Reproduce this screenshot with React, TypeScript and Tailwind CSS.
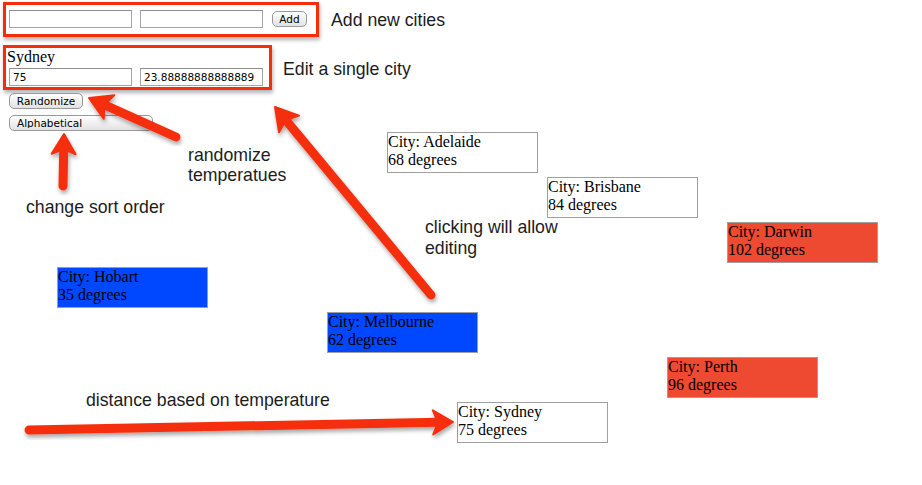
import { useState } from 'react'

type City = { name: string; temp: number }

const cities: City[] = [
  { name: 'Adelaide', temp: 68 },
  { name: 'Brisbane', temp: 84 },
  { name: 'Darwin', temp: 102 },
  { name: 'Hobart', temp: 35 },
  { name: 'Melbourne', temp: 62 },
  { name: 'Perth', temp: 96 },
  { name: 'Sydney', temp: 75 },
]

function colorFor(t: number) {
  if (t < 65) return 'bg-[#0048ff]'
  if (t > 90) return 'bg-[#ee4a32]'
  return 'bg-white'
}

function Arrow({ x1, y1, x2, y2, len = 22, half = 13 }: { x1: number; y1: number; x2: number; y2: number; len?: number; half?: number }) {
  const d = Math.hypot(x2 - x1, y2 - y1)
  const ux = (x2 - x1) / d
  const uy = (y2 - y1) / d
  const nx = -uy
  const ny = ux
  const bx = x2 - ux * len
  const by = y2 - uy * len
  const cx = x2 - ux * (len - 5)
  const cy = y2 - uy * (len - 5)
  const pts = [
    [x2, y2],
    [bx + nx * half, by + ny * half],
    [cx, cy],
    [bx - nx * half, by - ny * half],
  ].map(p => p.join(',')).join(' ')
  return (
    <g filter="url(#shadow)">
      <line x1={x1} y1={y1} x2={cx} y2={cy} stroke="#f52f0c" strokeWidth={9} strokeLinecap="round" />
      <polygon points={pts} fill="#f52f0c" stroke="#f52f0c" strokeWidth={2} strokeLinejoin="round" />
    </g>
  )
}

const inp = 'w-[123px] h-[18px] border border-[#a5a5a5] border-t-[#8e8e8e] bg-white px-[3px] text-[10.5px] text-black outline-none font-["DejaVu_Sans",sans-serif]'
const btn = 'h-[16px] rounded-[5px] border border-[#9a9a9a] bg-gradient-to-b from-white to-[#e2e2e2] text-[10.5px] leading-none text-black font-["DejaVu_Sans",sans-serif]'
const note = 'absolute text-[17.7px] leading-[20px] text-[#1c1c1c] font-["Liberation_Sans",Arial,sans-serif] whitespace-nowrap'

export default function App() {
  const [temp, setTemp] = useState('75')
  const [celsius, setCelsius] = useState('23.88888888888889')

  return (
    <div className="relative w-[922px] h-[485px] overflow-hidden bg-white pt-[2px] pl-[3px]">
      {/* add new */}
      <div className="w-[316px] h-[35px] border-[3px] border-[#f52d0a] shadow-[1px_3px_4px_rgba(0,0,0,0.3)] flex items-start pt-[5px] pl-[3px]">
        <input className={inp} />
        <input className={inp + ' ml-[8px]'} />
        <button className={btn + ' w-[35px] ml-[9px] mt-[1px]'}>Add</button>
      </div>

      {/* edit city */}
      <div className="mt-[8px] w-[269px] h-[45px] border-[3px] border-[#f52d0a] shadow-[1px_3px_4px_rgba(0,0,0,0.3)]">
        <div className='pl-[1px] text-[16px] leading-[18px] text-black font-["Liberation_Serif","Times_New_Roman",serif]'>Sydney</div>
        <div className="flex mt-[2px] pl-[3px]">
          <input className={inp} value={temp} onChange={e => setTemp(e.target.value)} />
          <input className={inp + ' ml-[8px]'} value={celsius} onChange={e => setCelsius(e.target.value)} />
        </div>
      </div>

      <div className="pl-[6px] mt-[3px] flex flex-col items-start">
        <button className={btn + ' w-[74px] h-[15px] rounded-[4px]'}>Randomize</button>
        <select className={btn + ' appearance-none mt-[6px] w-[144px] h-[16px] rounded-[4px] pl-[7px]'}>
          <option>Alphabetical</option>
        </select>
      </div>

      {/* cities */}
      {cities.map((c, i) => (
        <div
          key={c.name}
          className={`absolute box-border w-[151px] h-[41px] border border-[#9f9f9f] text-[16px] leading-[18px] text-black font-["Liberation_Serif","Times_New_Roman",serif] ${colorFor(c.temp)}`}
          style={{ left: 57 + (c.temp - 35) * 10, top: 132 + i * 45 }}
        >
          <div>City: {c.name}</div>
          <div>{c.temp} degrees</div>
        </div>
      ))}

      {/* annotations */}
      <div className={note + ' left-[331px] top-[10px]'}>Add new cities</div>
      <div className={note + ' left-[283px] top-[59px]'}>Edit a single city</div>
      <div className={note + ' left-[188px] top-[145px]'}>randomize<br />temperatues</div>
      <div className={note + ' left-[26px] top-[197px]'}>change sort order</div>
      <div className={note + ' left-[425px] top-[217px] leading-[21px]'}>clicking will allow<br />editing</div>
      <div className={note + ' left-[86px] top-[390px]'}>distance based on temperature</div>

      <svg className="absolute left-0 top-0 pointer-events-none" width={922} height={485}>
        <defs>
          <filter id="shadow" x="-20%" y="-20%" width="140%" height="140%">
            <feDropShadow dx="1" dy="3" stdDeviation="2" floodColor="#000" floodOpacity="0.35" />
          </filter>
        </defs>
        <Arrow x1={176} y1={137} x2={89} y2={98} />
        <Arrow x1={63} y1={186} x2={64} y2={134} len={20} half={12} />
        <Arrow x1={431} y1={295} x2={275} y2={107} />
        <Arrow x1={29} y1={430} x2={453} y2={422} len={20} half={12} />
      </svg>
    </div>
  )
}
